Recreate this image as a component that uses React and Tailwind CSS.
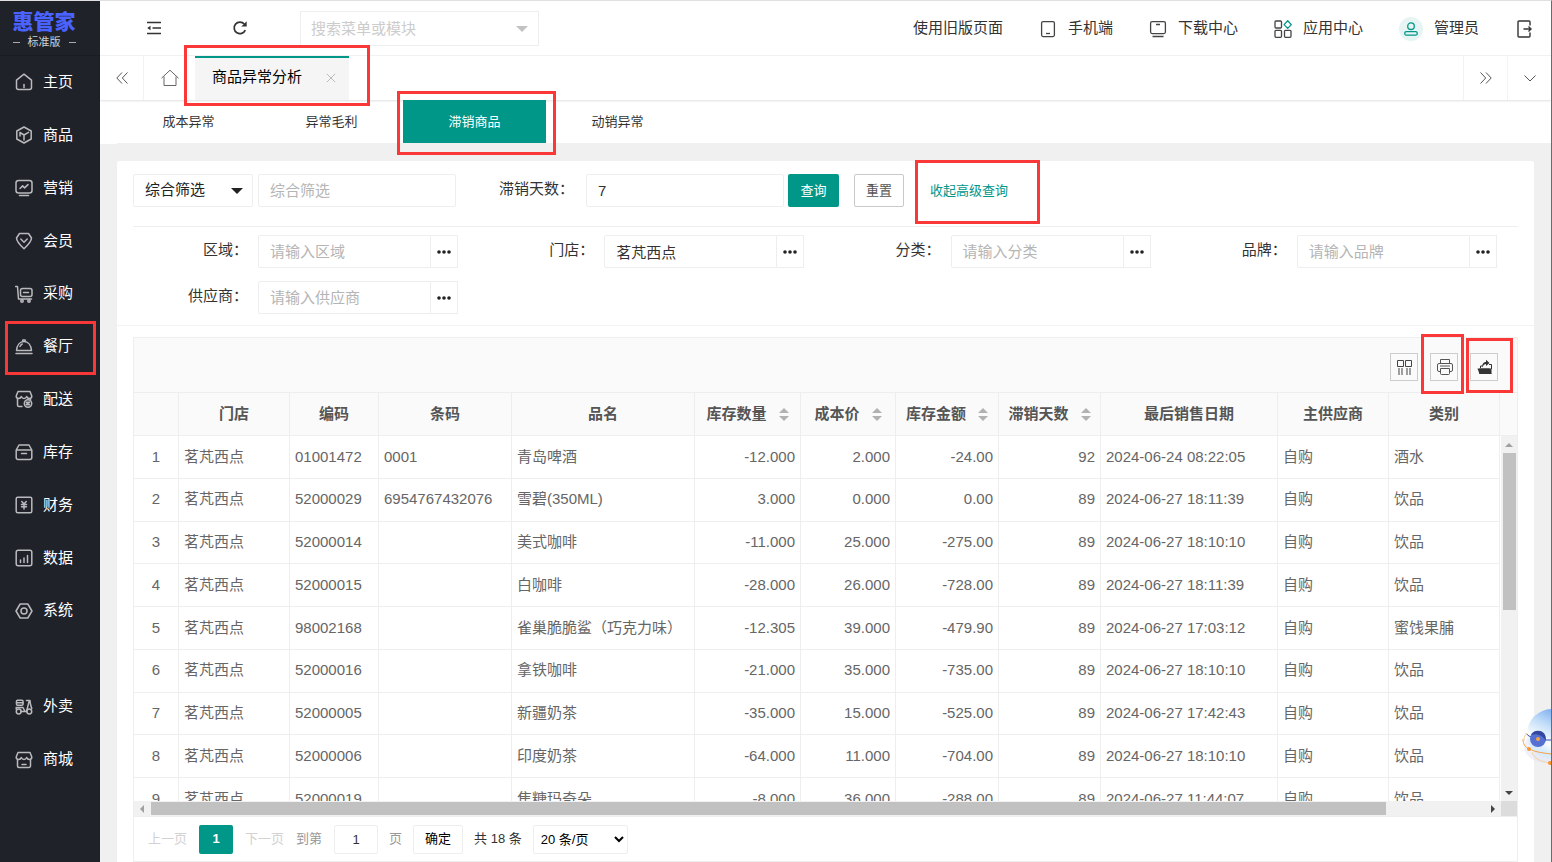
import React from 'react'
import clsx from 'clsx'

const NAV_ICONS = {
  home: (
    <>
      <path d="M1.5 7.2 9 1.2l7.500 6v7.300a2 2 0 0 1-2 2h-11a2 2 0 0 1-2-2z" />
      <path d="M9 11.500v3" />
    </>
  ),
  goods: (
    <>
      <path d="M9 1 16.200 5v8L9 17 1.800 13V5z" />
      <path d="M5 6.500 9 9l4.500-2.600M9 9v5M5 6.500V10" />
    </>
  ),
  sale: (
    <>
      <rect x="1" y="1.500" width="16" height="12.500" rx="2.500" />
      <path d="m5 9.500 2.600-2.600 2 2L13 5.600M4.500 16.500h9" />
    </>
  ),
  vip: (
    <>
      <path d="M4.500 1.500h9l3 4.500c0 3-4 7.500-7.500 10.800C5.500 13.500 1.500 9 1.500 6z" />
      <path d="m5.800 7 3.200 3.200L12.200 7" />
    </>
  ),
  buy: (
    <>
      <path d="M.5 1.500h2l1 12.500h13" />
      <rect x="5.500" y="3.500" width="11.500" height="8" rx="2" />
      <path d="M8.500 7.500h5" />
      <circle cx="7" cy="16" r="1.200" />
      <circle cx="14" cy="16" r="1.200" />
    </>
  ),
  dish: (
    <>
      <path d="M1.500 13.500C2 8 5 4.500 9 4.500S16 8 16.500 13.500z" />
      <path d="M7.800 4.200V3h2.400v1.200M5 9.500c.5-1.200 1.200-2 2.200-2.500M1 16.500h16" />
    </>
  ),
  delivery: (
    <>
      <path d="M7 16.500H4a1.500 1.500 0 0 1-1.500-1.500V8.500M15.500 8.500v1M3 1.500h12l1.800 4.500c0 1.500-1 2.500-2.400 2.500S12 7.500 11.700 6.500C11 8 10 8.500 9 8.500S7 8 6.300 6.500C6 7.500 5 8.500 3.600 8.500S1.200 7.500 1.200 6z" />
      <circle cx="13" cy="13.500" r="3.700" />
      <path d="m11.200 14.500 3.400-2.200M11.200 12.300h3.400M11.200 14.700h3.400" />
    </>
  ),
  stock: (
    <>
      <path d="M1.200 7 4 2h10l2.800 5v7.500a2 2 0 0 1-2 2H3.200a2 2 0 0 1-2-2zM1.200 7h15.600M6.500 10.500h5" />
    </>
  ),
  money: (
    <>
      <rect x="1.200" y="1.200" width="15.600" height="15.600" rx="1.500" />
      <path d="M6.800 5.500 9 8l2.200-2.500M9 8v5M6.500 8.500h5M6.500 10.700h5" />
    </>
  ),
  chart: (
    <>
      <rect x="1.200" y="1.200" width="15.600" height="15.600" rx="2" />
      <path d="M5.500 11v2.500M9 9v4.500M12.500 6.500v7" />
    </>
  ),
  system: (
    <>
      <path d="M5.200 2h7.600L17 9l-4.200 7H5.200L1 9z" />
      <circle cx="9" cy="9" r="3" />
    </>
  ),
  takeout: (
    <>
      <rect x="1.500" y="2.200" width="6.500" height="5" rx="1" />
      <path d="M1.500 4.700H8M1.200 11V9.500H8l2 4h1.500L14.200 3M11.500 2.500h3.500l.5 4 1.300 4M6 13.500h4" />
      <circle cx="3.700" cy="13.500" r="2.400" />
      <circle cx="14.300" cy="13.500" r="2.400" />
    </>
  ),
  mall: (
    <>
      <path d="M2.500 8.500V15A1.500 1.500 0 0 0 4 16.500h10a1.500 1.500 0 0 0 1.500-1.500V8.500M3 1.500h12l1.800 4.500c0 1.500-1 2.500-2.400 2.500S12 7.500 11.700 6.500C11 8 10 8.500 9 8.500S7 8 6.300 6.500C6 7.500 5 8.500 3.600 8.500S1.200 7.500 1.200 6zM7 13.500h4" />
    </>
  ),
}

const mainNav = [
  ['home', '主页'],
  ['goods', '商品'],
  ['sale', '营销'],
  ['vip', '会员'],
  ['buy', '采购'],
  ['dish', '餐厅'],
  ['delivery', '配送'],
  ['stock', '库存'],
  ['money', '财务'],
  ['chart', '数据'],
  ['system', '系统'],
]

const extraNav = [
  ['takeout', '外卖'],
  ['mall', '商城'],
]

const columns = [
  { title: '', width: 'w-[45px]', align: 'text-center' },
  { title: '门店', width: 'w-[111px]' },
  { title: '编码', width: 'w-[89px]' },
  { title: '条码', width: 'w-[133px]' },
  { title: '品名', width: 'w-[183px]' },
  { title: '库存数量', width: 'w-[106px]', align: 'text-right', sort: true },
  { title: '成本价', width: 'w-[95px]', align: 'text-right', sort: true },
  { title: '库存金额', width: 'w-[103px]', align: 'text-right', sort: true },
  { title: '滞销天数', width: 'w-[102px]', align: 'text-right', sort: true },
  { title: '最后销售日期', width: 'w-[177px]' },
  { title: '主供应商', width: 'w-[111px]' },
  { title: '类别', width: 'w-[111px]' },
]

const rows = [
  ['1', '茗芃西点', '01001472', '0001', '青岛啤酒', '-12.000', '2.000', '-24.00', '92', '2024-06-24 08:22:05', '自购', '酒水'],
  ['2', '茗芃西点', '52000029', '6954767432076', '雪碧(350ML)', '3.000', '0.000', '0.00', '89', '2024-06-27 18:11:39', '自购', '饮品'],
  ['3', '茗芃西点', '52000014', '', '美式咖啡', '-11.000', '25.000', '-275.00', '89', '2024-06-27 18:10:10', '自购', '饮品'],
  ['4', '茗芃西点', '52000015', '', '白咖啡', '-28.000', '26.000', '-728.00', '89', '2024-06-27 18:11:39', '自购', '饮品'],
  ['5', '茗芃西点', '98002168', '', '雀巢脆脆鲨（巧克力味）', '-12.305', '39.000', '-479.90', '89', '2024-06-27 17:03:12', '自购', '蜜饯果脯'],
  ['6', '茗芃西点', '52000016', '', '拿铁咖啡', '-21.000', '35.000', '-735.00', '89', '2024-06-27 18:10:10', '自购', '饮品'],
  ['7', '茗芃西点', '52000005', '', '新疆奶茶', '-35.000', '15.000', '-525.00', '89', '2024-06-27 17:42:43', '自购', '饮品'],
  ['8', '茗芃西点', '52000006', '', '印度奶茶', '-64.000', '11.000', '-704.00', '89', '2024-06-27 18:10:10', '自购', '饮品'],
  ['9', '茗芃西点', '52000019', '', '焦糖玛奇朵', '-8.000', '36.000', '-288.00', '89', '2024-06-27 11:44:07', '自购', '饮品'],
]

// red frame around the things the guide talks about
const Mark = ({ className }) => (
  <span className={clsx('pointer-events-none absolute z-20 border-[3px] border-[#fb3838]', className)} />
)

const NavItem = ({ icon, text, marked }) => (
  <a href="#" className="relative flex items-center gap-[10px] pl-[15px] text-[15px] text-white">
    <svg className="h-[18px] w-[18px]" viewBox="0 0 18 18" fill="none" stroke="#b9babd" strokeWidth="1.5" strokeLinejoin="round" strokeLinecap="round">
      {NAV_ICONS[icon]}
    </svg>
    {text}
    {marked && <Mark className="left-[5px] top-px h-[54px] w-[91px]" />}
  </a>
)

const Sidebar = () => (
  <aside className="w-[100px] shrink-0 bg-[#20222a]">
    <div className="flex h-[55px] flex-col items-center border-b border-[#1a1c23] pr-3 pt-[9px]">
      <div className="text-[21px] font-black leading-6 text-[#4a62ff]">惠管家</div>
      <div className="flex items-center gap-2 text-[11px] leading-4 text-[#d0d1d4]">
        <i className="h-px w-[7px] bg-[#a9aaad]" />
        标准版
        <i className="h-px w-[7px] bg-[#a9aaad]" />
      </div>
    </div>
    <nav className="grid h-[581px] auto-rows-fr">
      {mainNav.map(([icon, text]) => (
        <NavItem key={icon} icon={icon} text={text} marked={icon === 'dish'} />
      ))}
    </nav>
    <nav className="mt-[43px] grid h-[106px] auto-rows-fr">
      {extraNav.map(([icon, text]) => (
        <NavItem key={icon} icon={icon} text={text} />
      ))}
    </nav>
  </aside>
)

const HeaderLink = ({ children, text }) => (
  <a href="#" className="flex items-center gap-[11px] whitespace-nowrap">
    {children}
    {text}
  </a>
)

const Header = () => (
  <header className="flex h-[55px] items-center border-b border-[#f3f3f3] bg-white pl-[11px] pr-[18px] text-[15px] text-[#333]">
    <button aria-label="收起菜单" className="flex w-[86px] justify-center">
      <svg className="h-4 w-4" viewBox="0 0 16 16" fill="none" stroke="#333" strokeWidth="1.600">
        <path d="M1 2.500h14M6.500 8H15M1 13.500h14" />
        <path d="M4.500 5.800v4.400L1.200 8z" fill="#333" stroke="none" />
      </svg>
    </button>
    <button aria-label="刷新" className="flex w-[86px] justify-center">
      <svg className="h-4 w-4" viewBox="0 0 16 16" fill="none" stroke="#333" strokeWidth="1.700">
        <path d="M13.300 10.200A5.800 5.800 0 1 1 12.300 4" />
        <path d="M14.700 1.200v5.300H9.400z" fill="#333" stroke="none" />
      </svg>
    </button>
    <div className="relative ml-[17px] w-[239px]">
      <input
        aria-label="搜索菜单或模块"
        placeholder="搜索菜单或模块"
        className="h-[35px] w-full border border-[#eee] pl-[10px] pr-8 outline-none placeholder:text-[#ccc]"
      />
      <i className="absolute right-[11px] top-[15px] border-x-[6px] border-t-[6px] border-x-transparent border-t-[#c2c2c2]" />
    </div>
    <div className="ml-auto flex items-center gap-9 pt-px">
      <HeaderLink text="使用旧版页面" />
      <HeaderLink text="手机端">
        <svg className="h-[18px] w-[18px]" viewBox="0 0 18 18" fill="none" stroke="#444" strokeWidth="1.300">
          <rect x="2.600" y="1.600" width="12.800" height="15" rx="1.500" />
          <path d="M7 13.500h4" />
        </svg>
      </HeaderLink>
      <HeaderLink text="下载中心">
        <svg className="h-[18px] w-[18px]" viewBox="0 0 18 18" fill="none" stroke="#444" strokeWidth="1.300">
          <rect x="1.600" y="1.600" width="14.800" height="12" rx="1.500" />
          <path d="M7 4.500h4M3.500 16.500h11" />
        </svg>
      </HeaderLink>
      <HeaderLink text="应用中心">
        <svg className="h-[18px] w-[18px]" viewBox="0 0 18 18" fill="none" stroke="#444" strokeWidth="1.300">
          <rect x="1" y="1" width="6.500" height="7" rx="1" />
          <rect x="1" y="10.300" width="6.500" height="7" rx="1" />
          <rect x="10.500" y="10.300" width="6.500" height="7" rx="1" />
          <path d="m13.700.8 3.600 3.800-3.600 3.800-3.600-3.800z" stroke="#009688" strokeLinejoin="round" />
        </svg>
      </HeaderLink>
      <HeaderLink text="管理员">
        <span className="flex h-6 w-6 items-center justify-center rounded-full bg-[#e6f5f3]">
          <svg className="h-[14px] w-[14px]" viewBox="0 0 14 14" fill="none" stroke="#009688" strokeWidth="1.300">
            <circle cx="7" cy="4.200" r="3.300" />
            <rect x=".8" y="9.600" width="12.400" height="3.600" rx="1.500" />
          </svg>
        </span>
      </HeaderLink>
      <button aria-label="退出">
        <svg className="block h-[18px] w-[18px]" viewBox="0 0 18 18" fill="none" stroke="#333" strokeWidth="1.400">
          <path d="M15 5.500V2a1 1 0 0 0-1-1H4a1 1 0 0 0-1 1v14a1 1 0 0 0 1 1h10a1 1 0 0 0 1-1v-3.500M8.500 9H16M13.500 6.500 16 9l-2.500 2.500" />
        </svg>
      </button>
    </div>
  </header>
)

const PageTabs = () => (
  <div className="relative z-10 flex h-11 bg-white shadow-[0_1px_2px_rgba(0,0,0,0.12)]">
    <button aria-label="向左" className="flex w-11 items-center justify-center border-r border-[#f3f3f3]">
      <svg className="h-3 w-3" viewBox="0 0 12 12" fill="none" stroke="#555">
        <path d="M6 .5.800 6 6 11.500M11.500.5 6.300 6l5.200 5.500" />
      </svg>
    </button>
    <button aria-label="首页" className="flex w-[51px] items-center justify-center">
      <svg className="h-[18px] w-[18px]" viewBox="0 0 18 18" fill="none" stroke="#666">
        <path d="M.5 9.200 9 1.200l8.500 8M3 7.500v9h12v-9" />
      </svg>
    </button>
    <div className="relative flex w-[154px] items-center justify-between border-t-2 border-[#009688] bg-[#f5f5f5] pb-[3px] pl-[17px] pr-[13px] text-[15px] text-black">
      <span>商品异常分析</span>
      <button aria-label="关闭">
        <svg className="block h-[10px] w-[10px]" viewBox="0 0 10 10" stroke="#bbb">
          <path d="m.8.800 8.400 8.400M9.200.800.800 9.200" />
        </svg>
      </button>
      <Mark className="-left-[11px] -top-[13px] h-[61px] w-[186px]" />
    </div>
    <button aria-label="向右" className="ml-auto flex w-11 items-center justify-center border-l border-[#f3f3f3]">
      <svg className="h-3 w-3" viewBox="0 0 12 12" fill="none" stroke="#555">
        <path d="M.5.500 5.700 6 .5 11.500M6 .5 11.200 6 6 11.500" />
      </svg>
    </button>
    <button aria-label="更多" className="flex w-11 items-center justify-center border-l border-[#f3f3f3]">
      <svg className="h-3 w-3" viewBox="0 0 12 12" fill="none" stroke="#555">
        <path d="M.5 3.500 6 9l5.500-5.500" />
      </svg>
    </button>
  </div>
)

const SubTabs = () => (
  <div className="bg-white pl-[17px]">
    <nav className="flex h-11 border-b border-[#f0f0f0] text-[13px] text-[#333]">
      {['成本异常', '异常毛利', '滞销商品', '动销异常'].map((t) => {
        const active = t === '滞销商品'
        return (
          <a
            key={t}
            href="#"
            className={clsx('flex w-[143px] items-center justify-center', active && 'relative z-10 bg-[#009688] text-white')}
          >
            {t}
            {active && <Mark className="-left-[6px] -top-[9px] h-[64px] w-[159px]" />}
          </a>
        )
      })}
    </nav>
  </div>
)

const inputClass = 'h-[33px] min-w-0 rounded-xs border border-[#eee] bg-white px-[11px] text-[#333] outline-none placeholder:text-[#b5b5b5]'

const PickField = ({ id, label, value }) => (
  <div className="flex">
    <label htmlFor={id} className="w-[125px] shrink-0 pr-[10px] text-right leading-[30px]">{label}：</label>
    <input id={id} className={clsx(inputClass, 'w-[173px] rounded-r-none')} placeholder={'请输入' + label} defaultValue={value} />
    <button aria-label={'选择' + label} className="flex h-[33px] w-[27px] items-center justify-center border border-l-0 border-[#eee]">
      <svg className="h-1 w-[14px]" viewBox="0 0 14 4" fill="#222">
        <circle cx="2" cy="2" r="1.800" />
        <circle cx="7" cy="2" r="1.800" />
        <circle cx="12" cy="2" r="1.800" />
      </svg>
    </button>
  </div>
)

const Filters = () => (
  <form className="border-b border-[#f3f3f3] px-4 pb-[11px] pt-[13px] text-[15px] text-[#333]" onSubmit={(e) => e.preventDefault()}>
    <div className="flex border-b border-[#eee] pb-[19px]">
      <div className="relative mr-[5px]">
        <select aria-label="筛选方式" className="h-[33px] w-[120px] appearance-none rounded-xs border border-[#eee] bg-white pl-[11px] text-[#222]">
          <option>综合筛选</option>
        </select>
        <i className="pointer-events-none absolute right-[10px] top-[14px] border-x-[6px] border-t-[6px] border-x-transparent border-t-[#222]" />
      </div>
      <input aria-label="综合筛选" placeholder="综合筛选" className={clsx(inputClass, 'w-[198px]')} />
      <label htmlFor="days" className="w-[130px] pr-3 text-right leading-[30px]">滞销天数：</label>
      <input id="days" defaultValue="7" className={clsx(inputClass, 'w-[198px]')} />
      <button className="ml-1 h-[33px] w-[51px] rounded-xs bg-[#009688] text-[13px] text-white">查询</button>
      <button type="reset" className="ml-[15px] h-[33px] w-[50px] rounded-xs border border-[#c9c9c9] bg-white text-[13px] text-[#555]">重置</button>
      <a href="#" className="relative ml-[26px] text-[13px] leading-[33px] text-[#009688]">
        收起高级查询
        <Mark className="-left-[15px] -top-[14px] h-[64px] w-[125px]" />
      </a>
    </div>
    <div className="grid grid-cols-4 gap-y-[13px] pt-2">
      <PickField id="area" label="区域" />
      <PickField id="shop" label="门店" value="茗芃西点" />
      <PickField id="type" label="分类" />
      <PickField id="brand" label="品牌" />
      <PickField id="supplier" label="供应商" />
    </div>
  </form>
)

const toolClass = 'relative flex h-7 w-7 items-center justify-center border border-[#ccc] pl-[2px]'

const Toolbar = () => (
  <div className="flex h-[55px] items-center justify-end gap-3 border-b border-[#eee] bg-[#fafafa] pr-[19px] pt-1">
    <button aria-label="筛选列" className={toolClass}>
      <svg className="h-4 w-4" viewBox="0 0 16 16" fill="none" stroke="#444">
        <path d="M.5 1.500h6v6h-6zM8.500 1.500h6v6h-6zM2 9v7M5 9v7M10 9v7M13 9v7" />
      </svg>
    </button>
    <button aria-label="打印" className={toolClass}>
      <svg className="h-4 w-4" viewBox="0 0 16 16" fill="none" stroke="#555">
        <path d="M3.500 4.500v-4h9v4M3.500 12.500H2a1.500 1.500 0 0 1-1.500-1.500V6A1.500 1.500 0 0 1 2 4.500h12A1.500 1.500 0 0 1 15.500 6v5a1.500 1.500 0 0 1-1.500 1.500h-1.500M3.500 9.500h9v5a1 1 0 0 1-1 1h-7a1 1 0 0 1-1-1zM3 7h10" />
      </svg>
      <Mark className="-left-[10px] -top-[20px] h-[60px] w-[43px]" />
    </button>
    <button aria-label="导出" className={toolClass}>
      <svg className="h-4 w-4" viewBox="0 0 16 16" fill="#333">
        <path d="M.5 9.500h12l2 5.500H2.500z" />
        <path d="M2.500 9.500h12V15h-12z" />
        <path d="M5 8.500C5 4.500 7 3 9 3V.800L12.500 4 9 7V5C7.500 5 6.500 6 5 8.500z" />
        <path d="M3.500 9V7H5M12 5.500h2.500V10" fill="none" stroke="#333" />
      </svg>
      <Mark className="-left-[5px] -top-[16px] h-[55px] w-[47px]" />
    </button>
  </div>
)

const SortIcon = () => (
  <span className="flex flex-col gap-[3px]">
    <i className="border-x-[5px] border-b-[5px] border-x-transparent border-b-[#b2b2b2]" />
    <i className="border-x-[5px] border-t-[5px] border-x-transparent border-t-[#b2b2b2]" />
  </span>
)

const DataTable = () => (
  <div className="relative h-[408px] overflow-hidden">
    <table className="h-[428px] w-full table-fixed border-separate border-spacing-0 text-[15px] text-[#666]">
      <thead className="bg-[#fafafa]">
        <tr className="h-[43px]">
          {columns.map((c) => (
            <th key={c.title} className={clsx(c.width, 'border-b border-r border-[#eee] p-0 font-bold text-[#555]')}>
              <div className="flex items-center justify-center gap-3 whitespace-nowrap">
                {c.title}
                {c.sort && <SortIcon />}
              </div>
            </th>
          ))}
          <th className="border-b border-[#eee] p-0" />
        </tr>
      </thead>
      <tbody>
        {rows.map((row) => (
          <tr key={row[0]}>
            {row.map((cell, i) => (
              <td key={i} className={clsx('whitespace-nowrap border-b border-r border-[#eee] px-[5px] py-0', columns[i].align)}>
                {cell}
              </td>
            ))}
            <td className="p-0" />
          </tr>
        ))}
      </tbody>
    </table>
    <div className="absolute bottom-0 right-0 top-[43px] flex w-4 flex-col items-center bg-[#f1f1f1] pb-[6px] pt-[7px]">
      <i className="border-x-4 border-b-4 border-x-transparent border-b-[#a0a0a0]" />
      <div className="mt-[6px] h-[157px] w-[13px] bg-[#c1c1c1]" />
      <i className="mt-auto border-x-4 border-t-4 border-x-transparent border-t-[#444]" />
    </div>
  </div>
)

const HScroll = () => (
  <div className="flex h-4 items-center border-b border-[#eee] bg-[#f1f1f1]">
    <i className="ml-[6px] border-y-4 border-r-4 border-y-transparent border-r-[#a0a0a0]" />
    <div className="ml-[7px] mr-[105px] h-[13px] grow bg-[#c1c1c1]" />
    <i className="mr-[6px] border-y-4 border-l-4 border-y-transparent border-l-[#444]" />
    <div className="h-[15px] w-4 bg-[#dcdcdc]" />
  </div>
)

const Pager = () => (
  <div className="flex h-11 items-center gap-3 pl-[14px] text-[13px] text-[#333]">
    <button disabled className="text-[#d2d2d2]">上一页</button>
    <button className="h-[29px] w-[34px] rounded-xs bg-[#009688] font-bold text-white">1</button>
    <button disabled className="text-[#d2d2d2]">下一页</button>
    <label htmlFor="page" className="text-[#999]">到第</label>
    <div className="flex items-center gap-[11px]">
      <input id="page" defaultValue="1" className="h-[29px] w-11 rounded-xs border border-[#eee] text-center outline-none" />
      <span className="text-[#999]">页</span>
      <button className="h-[29px] w-[50px] rounded-xs border border-[#eee] text-black">确定</button>
      <span>共 18 条</span>
      <select aria-label="每页条数" className="h-[29px] w-[95px] rounded-xs border border-[#eee] bg-white pl-[3px] text-black">
        <option>20 条/页</option>
      </select>
    </div>
  </div>
)

// helper robot peeking in from the right edge
const Robot = () => (
  <button aria-label="客服" className="absolute right-0 top-[704px] z-10 overflow-hidden">
    <svg className="block h-[66px] w-[30px]" viewBox="0 0 30 66">
      <defs>
        <linearGradient id="ball" gradientUnits="userSpaceOnUse" x1="30" y1="4" x2="12" y2="40">
          <stop offset="0" stopColor="#7fb0f0" />
          <stop offset=".4" stopColor="#c3def9" />
          <stop offset=".8" stopColor="#fafdff" />
          <stop offset="1" stopColor="#d9ebfb" />
        </linearGradient>
      </defs>
      <ellipse cx="26" cy="42" rx="23" ry="16" fill="#dfe3f5" opacity=".5" />
      <circle cx="31" cy="29" r="25" fill="url(#ball)" />
      <path d="M5 28c2 3 4 4 7 4M24 35h6" fill="none" stroke="#3e4fa8" />
      <circle cx="17" cy="34" r="8" fill="#5570d2" />
      <path d="M10 30a8 8 0 0 1 14 0l1 6c-3-5-9-8-15-6z" fill="#33479f" />
      <circle cx="17" cy="34" r="2" fill="#f7a341" />
      <path d="M2 34c0 5 2 8 6 10 6 3 14 4 22 5" fill="none" stroke="#f7a14a" />
      <path d="M3 36c0-4 1-6 3-8M11 47c1 6 9 10 18 11" fill="none" stroke="#f9cfa0" />
      <circle cx="8" cy="44" r="2" fill="#f7962f" />
      <circle cx="29" cy="58" r="2" fill="#f7962f" />
    </svg>
  </button>
)

const App = () => (
  <div className="relative flex min-h-screen overflow-hidden border-r border-t border-r-[#6b6b6b] border-t-[#e0e0e0] bg-[#f0f0f0] font-['Liberation_Sans','Noto_Sans_CJK_SC',sans-serif]">
    <Sidebar />
    <div className="flex min-w-0 grow flex-col">
      <Header />
      <PageTabs />
      <SubTabs />
      <main className="grow px-[17px] pt-[17px]">
        <div className="rounded-t-xs bg-white">
          <Filters />
          <div className="px-4 pt-[11px]">
            <div className="border border-[#eee]">
              <Toolbar />
              <DataTable />
              <HScroll />
              <Pager />
            </div>
          </div>
        </div>
      </main>
    </div>
    <Robot />
  </div>
)

export default App
